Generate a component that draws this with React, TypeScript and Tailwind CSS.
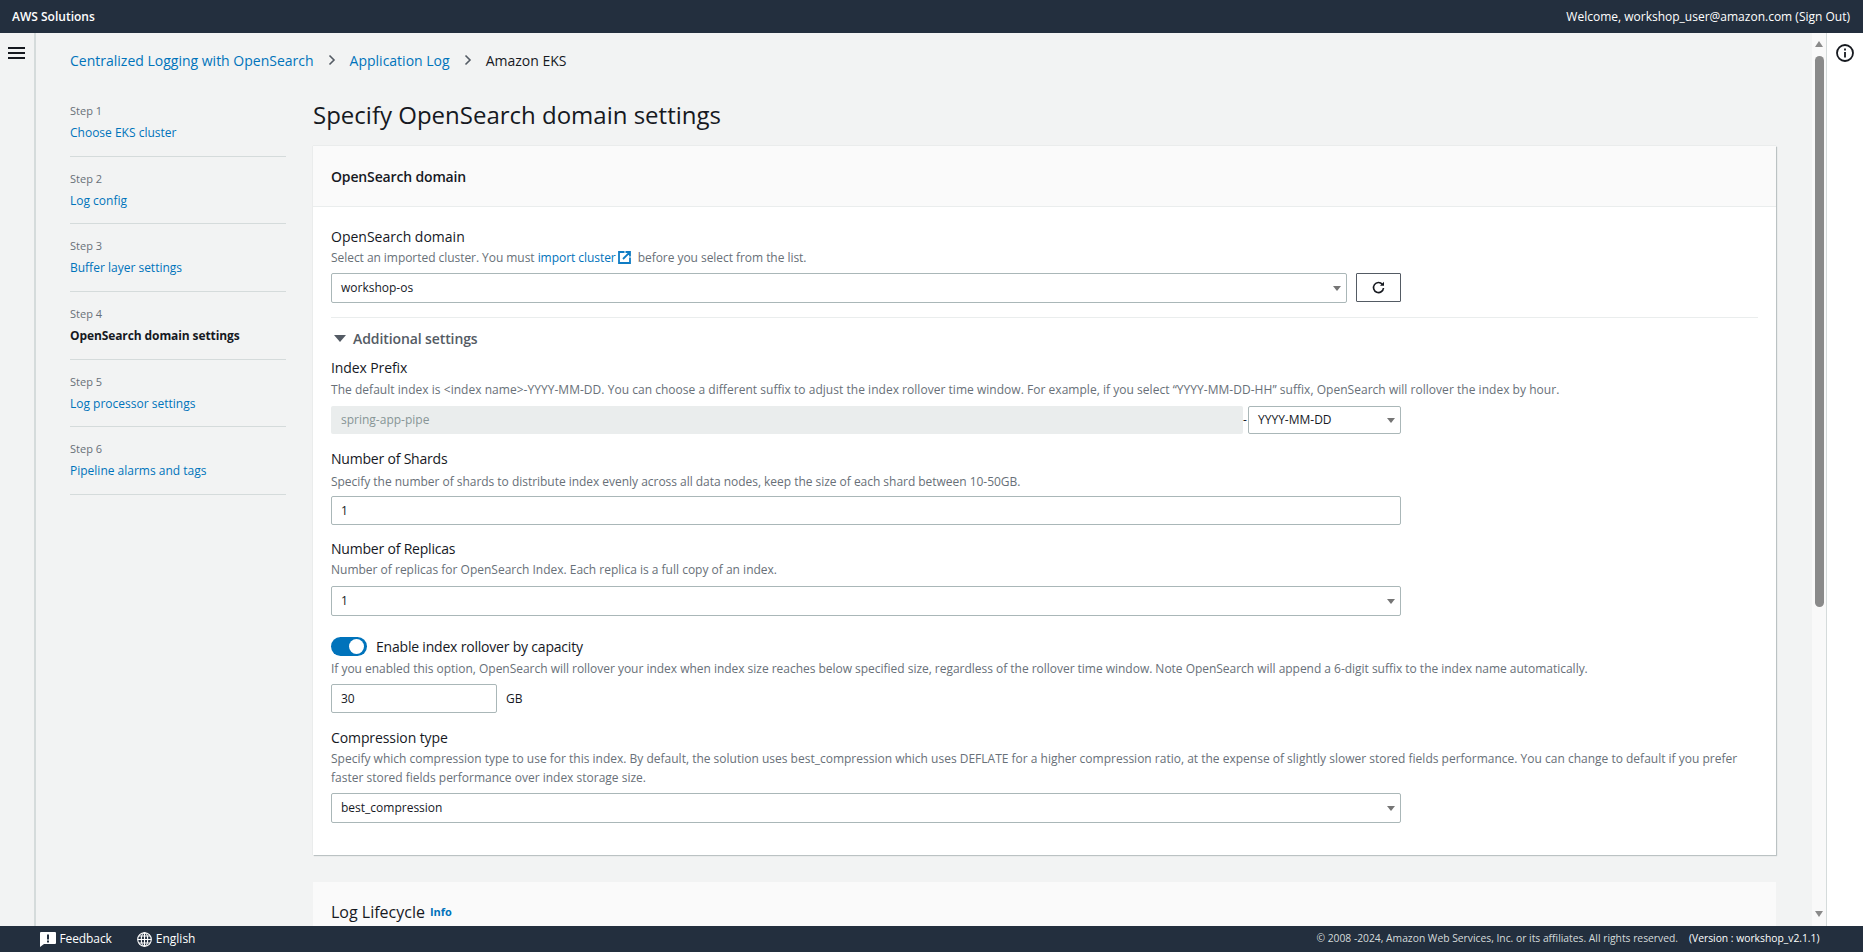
import { ReactNode } from "react";

const steps = [
  "Choose EKS cluster",
  "Log config",
  "Buffer layer settings",
  "OpenSearch domain settings",
  "Log processor settings",
  "Pipeline alarms and tags",
];

function Label({ className, children }: { className: string; children: ReactNode }) {
  return <div className={`text-[14px] leading-[22px] text-[#16191f] ${className}`}>{children}</div>;
}

function Desc({ className, children }: { className: string; children: ReactNode }) {
  return <div className={`text-[12px] text-[#687078] ${className}`}>{children}</div>;
}

function SelectBox({ value, className }: { value: string; className: string }) {
  return (
    <div className={`flex items-center justify-between rounded-[2px] border border-[#aab7b8] bg-white pl-[9px] pr-[5px] text-[12px] text-[#16191f] ${className}`}>
      <span>{value}</span>
      <span className="h-0 w-0 border-x-[4px] border-t-[5px] border-x-transparent border-t-[#757575]" />
    </div>
  );
}

function TextBox({ value, className }: { value: string; className: string }) {
  return (
    <div className={`flex items-center rounded-[2px] border border-[#aab7b8] bg-white pl-[9px] text-[12px] text-[#16191f] ${className}`}>
      {value}
    </div>
  );
}

function Chevron() {
  return (
    <svg width="8" height="12" viewBox="0 0 8 12" fill="none" stroke="#545b64" strokeWidth="1.6">
      <path d="M1.5 1.5 6 6l-4.5 4.5" />
    </svg>
  );
}

export default function App() {
  return (
    <div className="flex h-screen flex-col overflow-hidden bg-[#f2f3f3] font-['Open_Sans',sans-serif] text-[#16191f]">
      <header className="flex h-[33px] shrink-0 items-center justify-between bg-[#232f3e] pl-[12px] pr-[13px] text-[12px] text-white">
        <span className="font-semibold">AWS Solutions</span>
        <span>Welcome, workshop_user@amazon.com (Sign Out)</span>
      </header>

      <div className="flex min-h-0 flex-1">
        <aside className="w-[36px] shrink-0 border-r-2 border-[#d5dbdb] pl-[8px] pt-[14px]">
          <svg width="17" height="12" viewBox="0 0 17 12" stroke="#16191f" strokeWidth="1.8">
            <path d="M0 1h17M0 6h17M0 11h17" />
          </svg>
        </aside>

        <main className="min-w-0 flex-1 overflow-hidden pl-[34px]">
          <nav className="mt-[16px] flex h-[22px] items-center text-[14px] text-[#0073bb]">
            <span>Centralized Logging with OpenSearch</span>
            <span className="mx-[14px] flex"><Chevron /></span>
            <span>Application Log</span>
            <span className="mx-[14px] flex"><Chevron /></span>
            <span className="text-[#16191f]">Amazon EKS</span>
          </nav>

          <div className="mt-[19px] flex">
            <ol className="w-[216px] shrink-0 pt-[11px]">
              {steps.map((step, i) => (
                <li key={step} className="mb-[12px] h-[55.7px] border-b border-[#d5dbdb]">
                  <div className="text-[11px] leading-[20px] text-[#687078]">Step {i + 1}</div>
                  <div className={`mt-[1px] text-[12px] leading-[22px] ${i === 3 ? "font-bold tracking-[-0.1px] text-[#16191f]" : "text-[#0073bb]"}`}>
                    {step}
                  </div>
                </li>
              ))}
            </ol>

            <div className="ml-[27px] w-[1463px] shrink-0">
              <h1 className="mt-[7px] h-[36px] text-[24px] leading-[36px] text-[#16191f]">Specify OpenSearch domain settings</h1>

              <section className="mt-[13px] bg-white shadow-[1px_1px_1px_0_rgba(0,28,36,0.2),0_0_1px_0_rgba(0,28,36,0.2)]">
                <div className="flex h-[61px] items-center border-b border-[#eaeded] bg-[#fafafa] px-[18px] text-[14px] font-semibold tracking-[-0.15px]">
                  OpenSearch domain
                </div>
                <div className="px-[18px] pb-[32px] pt-[19px]">
                  <Label className="">OpenSearch domain</Label>
                  <Desc className="leading-[20px] tracking-[-0.05px]">
                    Select an imported cluster. You must <span className="text-[#0073bb]">import cluster</span>
                    <svg className="ml-[2px] mr-[7px] inline-block align-[-2px]" width="13" height="13" viewBox="0 0 13 13" fill="none" stroke="#0f7cc4" strokeWidth="1.8">
                      <path d="M6.5 1H1v11h11V6.5M7.5 1H12v4.5M12 1 5 8" />
                    </svg>
                    before you select from the list.
                  </Desc>
                  <div className="mt-[5px] flex w-[1070px] gap-[9px]">
                    <SelectBox value="workshop-os" className="h-[30px] flex-1" />
                    <button className="flex h-[29px] w-[45px] items-center justify-center rounded-[1px] border border-[#545b64] bg-white">
                      <svg width="13" height="13" viewBox="0 0 13 13" fill="none" stroke="#16191f" strokeWidth="1.6">
                        <path d="M10.4 3.4A5 5 0 1 0 11.5 7" />
                        <path d="M12 .8v4H8z" fill="#16191f" stroke="none" />
                      </svg>
                    </button>
                  </div>

                  <div className="mt-[14px] h-px bg-[#eaeded]" />

                  <div className="mt-[9px] flex h-[22px] items-center text-[14px] font-semibold tracking-[-0.1px] text-[#545b64]">
                    <span className="ml-[3px] mr-[7px] h-0 w-0 border-x-[6.5px] border-t-[7px] border-x-transparent border-t-[#545b64]" />
                    Additional settings
                  </div>

                  <Label className="mt-[8px] tracking-[-0.1px]">Index Prefix</Label>
                  <Desc className="mt-[1px] leading-[20px] tracking-[0.03px]">
                    The default index is &lt;index name&gt;-YYYY-MM-DD. You can choose a different suffix to adjust the index rollover time window. For example, if you select “YYYY-MM-DD-HH” suffix, OpenSearch will rollover the index by hour.
                  </Desc>
                  <div className="mt-[6px] flex w-[1070px] items-center">
                    <div className="flex h-[28px] flex-1 items-center rounded-[2px] bg-[#eaeded] pl-[10px] text-[12px] text-[#879596]">spring-app-pipe</div>
                    <span className="w-[5px] text-[12px]">-</span>
                    <SelectBox value="YYYY-MM-DD" className="h-[28px] w-[153px]" />
                  </div>

                  <Label className="mt-[14px] tracking-[-0.2px]">Number of Shards</Label>
                  <Desc className="mt-[2px] leading-[20px] tracking-[-0.03px]">Specify the number of shards to distribute index evenly across all data nodes, keep the size of each shard between 10-50GB.</Desc>
                  <TextBox value="1" className="mt-[4px] h-[29px] w-[1070px]" />

                  <Label className="mt-[13px] tracking-[-0.2px]">Number of Replicas</Label>
                  <Desc className="leading-[20px]">Number of replicas for OpenSearch Index. Each replica is a full copy of an index.</Desc>
                  <SelectBox value="1" className="mt-[6px] h-[30px] w-[1070px]" />

                  <div className="mt-[21px] flex h-[19px] items-center">
                    <span className="flex h-[19px] w-[36px] items-center justify-end rounded-full bg-[#0073bb] pr-[3px]">
                      <span className="h-[15px] w-[15px] rounded-full bg-white" />
                    </span>
                    <span className="ml-[9px] text-[14px] tracking-[-0.2px] text-[#16191f]">Enable index rollover by capacity</span>
                  </div>
                  <Desc className="mt-[3px] leading-[20px] tracking-[-0.025px]">If you enabled this option, OpenSearch will rollover your index when index size reaches below specified size, regardless of the rollover time window. Note OpenSearch will append a 6-digit suffix to the index name automatically.</Desc>
                  <div className="mt-[5px] flex items-center">
                    <TextBox value="30" className="h-[29px] w-[166px]" />
                    <span className="ml-[9px] text-[12px]">GB</span>
                  </div>

                  <Label className="mt-[14px] tracking-[-0.1px]">Compression type</Label>
                  <Desc className="leading-[19px]">
                    Specify which compression type to use for this index. By default, the solution uses best_compression which uses DEFLATE for a higher compression ratio, at the expense of slightly slower stored fields performance. You can change to default if you prefer faster stored fields performance over index storage size.
                  </Desc>
                  <SelectBox value="best_compression" className="mt-[6px] h-[30px] w-[1070px]" />
                </div>
              </section>

              <section className="mt-[27px] bg-white">
                <div className="flex h-[61px] items-center border-b border-[#eaeded] bg-[#fafafa] px-[18px] text-[16px] font-medium">
                  Log Lifecycle <span className="ml-[5px] text-[11px] font-bold text-[#0073bb]">Info</span>
                </div>
              </section>
            </div>
          </div>
        </main>

        <div className="flex w-[14px] shrink-0 flex-col items-center bg-[#f9f9f9]">
          <span className="mt-[8px] h-0 w-0 border-x-[4.5px] border-b-[6px] border-x-transparent border-b-[#8a8a8a]" />
          <span className="mt-[9px] h-[551px] w-[9px] rounded-full bg-[#8a8a8a]" />
          <span className="mb-[9px] mt-auto h-0 w-0 border-x-[4.5px] border-t-[6px] border-x-transparent border-t-[#8a8a8a]" />
        </div>

        <aside className="flex w-[37px] shrink-0 justify-center border-l border-[#d5dbdb] bg-white pt-[11px]">
          <svg width="18" height="18" viewBox="0 0 18 18" fill="none" stroke="#16191f" strokeWidth="1.8">
            <circle cx="9" cy="9" r="8" />
            <path d="M9 8v5.5M9 4.5v2" />
          </svg>
        </aside>
      </div>

      <footer className="flex h-[26px] shrink-0 items-center bg-[#232f3e] pl-[40px] pr-[43.5px] text-[12px] text-white">
        <svg width="16" height="15" viewBox="0 0 16 15" fill="#fff">
          <path d="M1 0h14a1 1 0 0 1 1 1v10a1 1 0 0 1-1 1H4l-4 3V1a1 1 0 0 1 1-1zM7 2.5v5h2v-5zM7 8.5v2h2v-2z" fillRule="evenodd" />
        </svg>
        <span className="ml-[3.5px] tracking-[-0.1px]">Feedback</span>
        <svg className="ml-[25px]" width="15" height="15" viewBox="0 0 15 15" fill="none" stroke="#fff" strokeWidth="1.1">
          <circle cx="7.5" cy="7.5" r="6.8" />
          <ellipse cx="7.5" cy="7.5" rx="3.2" ry="6.8" />
          <path d="M.7 7.5h13.6M1.6 4h11.8M1.6 11h11.8M7.5.7v13.6" />
        </svg>
        <span className="ml-[4px]">English</span>
        <span className="ml-auto text-[10.3px] text-[#d5dbdb]">© 2008 -2024, Amazon Web Services, Inc. or its affiliates. All rights reserved.</span>
        <span className="ml-[11px] text-[10.3px] text-white">(Version : workshop_v2.1.1)</span>
      </footer>
    </div>
  );
}
